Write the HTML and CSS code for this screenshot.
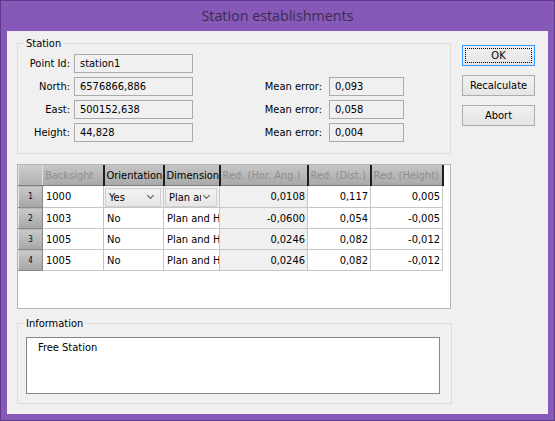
FILE: index.html
```html
<!DOCTYPE html>
<html lang="en">
<head>
    <meta charset="UTF-8">
    <title>Station establishments</title>
    <link rel="stylesheet" href="styles.css">
</head>
<body>

    <div class="window">
        <div class="titlebar">Station establishments</div>

        <div class="client">
            <div class="main">
                <fieldset class="group station">
                    <legend>Station</legend>
                    <div class="fields">
                        <label>Point Id:</label>
                        <div class="box">station1</div>
                        <span></span>
                        <span></span>

                        <label>North:</label>
                        <div class="box">6576866,886</div>
                        <label>Mean error:</label>
                        <div class="box small">0,093</div>

                        <label>East:</label>
                        <div class="box">500152,638</div>
                        <label>Mean error:</label>
                        <div class="box small">0,058</div>

                        <label>Height:</label>
                        <div class="box">44,828</div>
                        <label>Mean error:</label>
                        <div class="box small">0,004</div>
                    </div>
                </fieldset>

                <div class="grid-frame">
                    <table class="grid">
                        <colgroup>
                            <col style="width: 24px">
                            <col style="width: 61px">
                            <col style="width: 60px">
                            <col style="width: 56px">
                            <col style="width: 88px">
                            <col style="width: 63px">
                            <col style="width: 72px">
                        </colgroup>
                        <thead>
                            <tr>
                                <th class="corner"></th>
                                <th class="off">Backsight</th>
                                <th>Orientation</th>
                                <th>Dimension</th>
                                <th class="off">Red. (Hor. Ang.)</th>
                                <th class="off">Red. (Dist.)</th>
                                <th class="off">Red. (Height)</th>
                            </tr>
                        </thead>
                        <tbody>
                            <tr>
                                <td class="rowhead">1</td>
                                <td>1000</td>
                                <td class="combo-cell"><div class="combo">Yes<span class="chev"></span></div></td>
                                <td class="combo-cell"><div class="combo">Plan ar<span class="chev"></span></div></td>
                                <td class="num ro">0,0108</td>
                                <td class="num">0,117</td>
                                <td class="num">0,005</td>
                            </tr>
                            <tr>
                                <td class="rowhead">2</td>
                                <td>1003</td>
                                <td>No</td>
                                <td class="clip">Plan and H</td>
                                <td class="num ro">-0,0600</td>
                                <td class="num">0,054</td>
                                <td class="num">-0,005</td>
                            </tr>
                            <tr>
                                <td class="rowhead">3</td>
                                <td>1005</td>
                                <td>No</td>
                                <td class="clip">Plan and H</td>
                                <td class="num ro">0,0246</td>
                                <td class="num">0,082</td>
                                <td class="num">-0,012</td>
                            </tr>
                            <tr>
                                <td class="rowhead">4</td>
                                <td>1005</td>
                                <td>No</td>
                                <td class="clip">Plan and H</td>
                                <td class="num ro">0,0246</td>
                                <td class="num">0,082</td>
                                <td class="num">-0,012</td>
                            </tr>
                        </tbody>
                    </table>
                </div>

                <fieldset class="group info">
                    <legend>Information</legend>
                    <div class="info-box">Free Station</div>
                </fieldset>
            </div>

            <div class="buttons">
                <button class="default"><span>OK</span></button>
                <button>Recalculate</button>
                <button>Abort</button>
            </div>
        </div>
    </div>

</body>
</html>
```

FILE: styles.css
```css
body {
    margin: 0;
    font-family: "DejaVu Sans Condensed", "DejaVu Sans", sans-serif;
    font-size: 11px;
    color: #000;
}

.window {
    width: 555px;
    height: 421px;
    box-sizing: border-box;
    border: 1px solid #5d3b8a;
    background: #8658b8;
    display: flex;
    flex-direction: column;
}

.titlebar {
    height: 30px;
    line-height: 29px;
    text-align: center;
    font-family: "Open Sans", "Noto Sans", sans-serif;
    font-size: 14.3px;
    color: #3b2d50;
}

.client {
    flex: 1;
    margin: 0 6px 6px 6px;
    background: #f0f0f0;
    display: flex;
    padding: 0 12px 0 10px;
}

.main {
    width: 435px;
    display: flex;
    flex-direction: column;
}

/* group boxes */
.group {
    margin: 0;
    border: 1px solid #dcdcdc;
    padding: 0;
    min-width: 0;
}

.group legend {
    padding: 0 2px;
    margin-left: 6px;
    line-height: 13px;
}

.station {
    margin-top: 6px;
    width: 434px;
    box-sizing: border-box;
    height: 117px;
}

.fields {
    display: grid;
    grid-template-columns: 52px 123px 1fr 82px;
    grid-auto-rows: 19px;
    row-gap: 4px;
    padding: 4px 46px 0 0;
    align-items: center;
}

.fields label {
    text-align: right;
}

.box {
    height: 19px;
    box-sizing: border-box;
    border: 1px solid #aaaaaa;
    background: #f0f0f0;
    padding-left: 5px;
    line-height: 17px;
    margin-left: 4px;
}

.box.small {
    margin-left: 7px;
}

/* data grid */
.grid-frame {
    margin-top: 10px;
    width: 434px;
    height: 145px;
    box-sizing: border-box;
    border: 1px solid #b4b4b4;
    background: #fff;
    overflow: hidden;
}

.grid {
    table-layout: fixed;
    width: 424px;
    border-collapse: collapse;
}

.grid th {
    height: 20px;
    padding: 0 0 0 2px;
    font-weight: normal;
    text-align: left;
    white-space: nowrap;
    overflow: hidden;
    background: linear-gradient(to bottom, #c6c6c6, #a9a9a9);
    border-left: 1px solid #e2e2e2;
    border-right: 2px solid #1e1e1e;
    border-bottom: 1px solid #7a7a7a;
}

.grid th.off {
    color: #8e8e8e;
}

.grid th.corner {
    border-right: 1px solid #e2e2e2;
    background: linear-gradient(to bottom, #cdcdcd, #b2b2b2);
}

.grid td {
    height: 20px;
    padding: 0 0 0 3px;
    border: 1px solid #c6c6c6;
    white-space: nowrap;
    overflow: hidden;
}

.grid td.num {
    text-align: right;
    padding: 0 2px 0 0;
}

.grid td.ro {
    background: #f0f0f0;
}

.grid td.clip {
    text-overflow: clip;
}

.grid td.rowhead {
    padding: 0;
    text-align: center;
    font-size: 8px;
    background: linear-gradient(to bottom, #c9c9c9, #a6a6a6);
    border: 1px solid #e6e6e6;
    border-right-color: #888;
    border-bottom-color: #888;
}

.grid td.combo-cell {
    padding: 1px 2px 0 1px;
    background: #f0f0f0;
}

.combo {
    position: relative;
    height: 19px;
    box-sizing: border-box;
    line-height: 18px;
    padding-left: 3px;
    background: linear-gradient(to bottom, #f2f2f2, #e6e6e6);
    border: 1px solid #d0d0d0;
    overflow: hidden;
}

.chev {
    position: absolute;
    right: 3px;
    top: 0;
    width: 12px;
    height: 17px;
    background: linear-gradient(to bottom, #f2f2f2, #e6e6e6);
}

.chev::after {
    content: "";
    position: absolute;
    left: 3px;
    top: 4px;
    width: 4px;
    height: 4px;
    border-right: 1.5px solid #555;
    border-bottom: 1.5px solid #555;
    transform: rotate(45deg);
}

/* information */
.info {
    margin-top: 8px;
    width: 435px;
    box-sizing: border-box;
    height: 87px;
}

.info-box {
    margin: 7px 11px 0 8px;
    height: 57px;
    box-sizing: border-box;
    border: 1px solid #828790;
    background: #fff;
    padding: 3px 0 0 11px;
}

/* buttons */
.buttons {
    margin-left: 10px;
    padding-top: 14px;
    display: flex;
    flex-direction: column;
    gap: 9px;
}

button {
    width: 73px;
    height: 21px;
    padding: 0;
    font-family: inherit;
    font-size: 11px;
    color: #000;
    border: 1px solid #acacac;
    background: linear-gradient(to bottom, #f0f0f0, #e5e5e5);
}

button.default {
    border-color: #3399ff;
    padding: 2px;
}

button.default span {
    display: block;
    height: 100%;
    box-sizing: border-box;
    border: 1px dotted #000;
    line-height: 13px;
}
```
